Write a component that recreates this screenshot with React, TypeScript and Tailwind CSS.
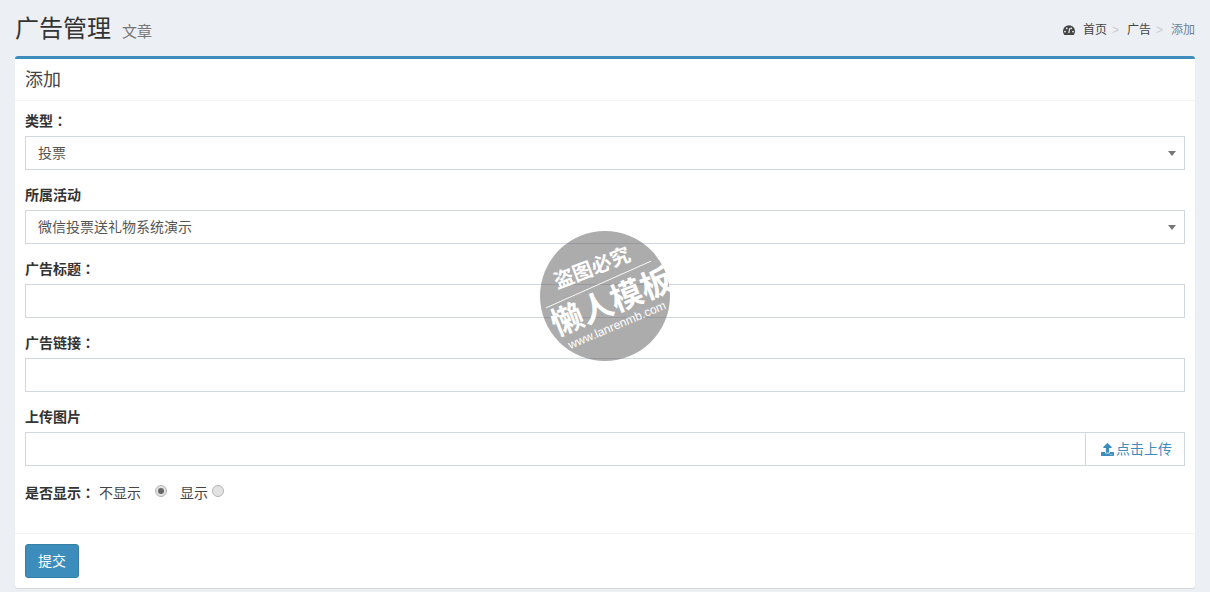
import { FaUpload } from 'react-icons/fa';

const fontFamily = "font-['Liberation_Sans','Noto_Sans_CJK_SC',sans-serif]";

// the colon sits in the middle of its cell in the reference
const Colon = () => <span className="leading-none font-['Noto_Sans_CJK_TC',sans-serif]">：</span>;

const DashboardIcon = () => (
  <svg viewBox="0 0 12 10" className="mr-[8px] w-3 h-[10px]">
    <path d="M1.3 10A6 6 0 1 1 10.7 10Z" fill="#444" />
    <circle cx="2" cy="6.6" r="0.9" fill="#ecf0f5" />
    <circle cx="3.8" cy="3.3" r="0.9" fill="#ecf0f5" />
    <circle cx="8.2" cy="3.3" r="0.9" fill="#ecf0f5" />
    <circle cx="10" cy="6.6" r="0.9" fill="#ecf0f5" />
    <path d="M5.8 8.2L6.8 3.2" stroke="#ecf0f5" strokeWidth="1.2" />
  </svg>
);

const Field = ({ label, colon, children }: { label: string; colon?: boolean; children?: React.ReactNode }) => (
  <div className="mb-[15px]">
    <label className="block mb-[5px] h-5 text-[14px] leading-5 font-bold text-[#333]">
      {label}
      {colon && <Colon />}
    </label>
    {children}
  </div>
);

const SelectBox = ({ value }: { value: string }) => (
  <div className="relative h-[34px] border border-[#d2d6de] pl-3 pr-3 text-[14px] leading-[32px] text-[#555]">
    {value}
    <span className="absolute right-[8px] top-[14px] w-0 h-0 border-x-[4px] border-x-transparent border-t-[5px] border-t-[#777]" />
  </div>
);

const TextBox = () => <input className="block w-full h-[34px] border border-[#d2d6de] px-3 text-[14px] outline-none" />;

const Radio = ({ checked }: { checked?: boolean }) => (
  <span className="inline-flex items-center justify-center w-3 h-3 rounded-full border border-[#b5b5b5] bg-[#e2e2e2]">
    {checked && <span className="w-[6px] h-[6px] rounded-full bg-[#666]" />}
  </span>
);

const Watermark = () => (
  <div className="absolute left-[540px] top-[231px] w-[130px] h-[130px] rounded-full bg-[rgba(95,95,95,0.52)] text-white">
    <div className="absolute left-[10px] top-[25px] w-[84px] text-center text-[20px] leading-6 font-bold -rotate-[21deg] whitespace-nowrap">盗图必究</div>
    <div className="absolute left-[1px] top-[53px] w-[115px] h-[1px] bg-white -rotate-[24deg]" />
    <div className="absolute left-[8px] top-[53px] w-[128px] text-center text-[32px] leading-9 font-bold -rotate-[22deg] whitespace-nowrap">懒人模板</div>
    <div className="absolute left-[22px] top-[86px] w-[110px] text-center text-[12px] leading-4 -rotate-[23deg] whitespace-nowrap font-['Liberation_Sans',sans-serif]">www.lanrenmb.com</div>
  </div>
);

export default function App() {
  return (
    <div className={`relative w-[1210px] h-[592px] overflow-hidden bg-[#ecf0f5] text-[#333] ${fontFamily}`}>
      <section className="flex items-start justify-between h-[56px] px-[15px] pt-[15px]">
        <h1 className="flex items-baseline text-[24px] leading-[28px] font-normal text-[#333]">
          广告管理
          <small className="ml-[11px] text-[15px] text-[#777]">文章</small>
        </h1>
        <ol className="flex items-center h-[29px] text-[12px] text-[#444]">
          <li className="flex items-center">
            <DashboardIcon />
            首页
          </li>
          <li className="pl-[5px] pr-[8px] text-[#ccc]">&gt;</li>
          <li>广告</li>
          <li className="pl-[5px] pr-[8px] text-[#ccc]">&gt;</li>
          <li className="text-[#6f8296]">添加</li>
        </ol>
      </section>

      <section className="mx-[15px] h-[532px] bg-white border-t-[3px] border-[#3c8dbc] rounded-[3px] shadow-[0_1px_1px_rgba(0,0,0,0.1)]">
        <div className="h-[42px] px-[10px] border-b border-[#f4f4f4] text-[18px] leading-[42px] text-[#444]">添加</div>
        <div className="px-[10px] pt-[10px] h-[432px]">
          <Field label="类型" colon>
            <SelectBox value="投票" />
          </Field>
          <Field label="所属活动">
            <SelectBox value="微信投票送礼物系统演示" />
          </Field>
          <Field label="广告标题" colon>
            <TextBox />
          </Field>
          <Field label="广告链接" colon>
            <TextBox />
          </Field>
          <Field label="上传图片">
            <div className="flex h-[34px] border border-[#d2d6de]">
              <div className="flex-1" />
              <div className="flex items-center w-[99px] pl-[15px] border-l border-[#d2d6de] text-[14px] text-[#3c8dbc]">
                <FaUpload className="w-[13px] h-[13px] mr-[2px]" />
                点击上传
              </div>
            </div>
          </Field>
          <div className="flex items-center h-5 mt-[17px] text-[14px]">
            <b className="text-[#333]">是否显示<Colon /></b>
            <span className="ml-[4px] text-[#444]">不显示</span>
            <span className="ml-[14px] -mt-1 flex"><Radio checked /></span>
            <span className="ml-[13px] text-[#444]">显示</span>
            <span className="ml-[4px] -mt-1 flex"><Radio /></span>
          </div>
        </div>
        <div className="border-t border-[#f4f4f4] p-[10px]">
          <button className="w-[54px] h-[34px] rounded-[3px] border border-[#367fa9] bg-[#3c8dbc] text-[14px] text-white">提交</button>
        </div>
      </section>

      <Watermark />
    </div>
  );
}
